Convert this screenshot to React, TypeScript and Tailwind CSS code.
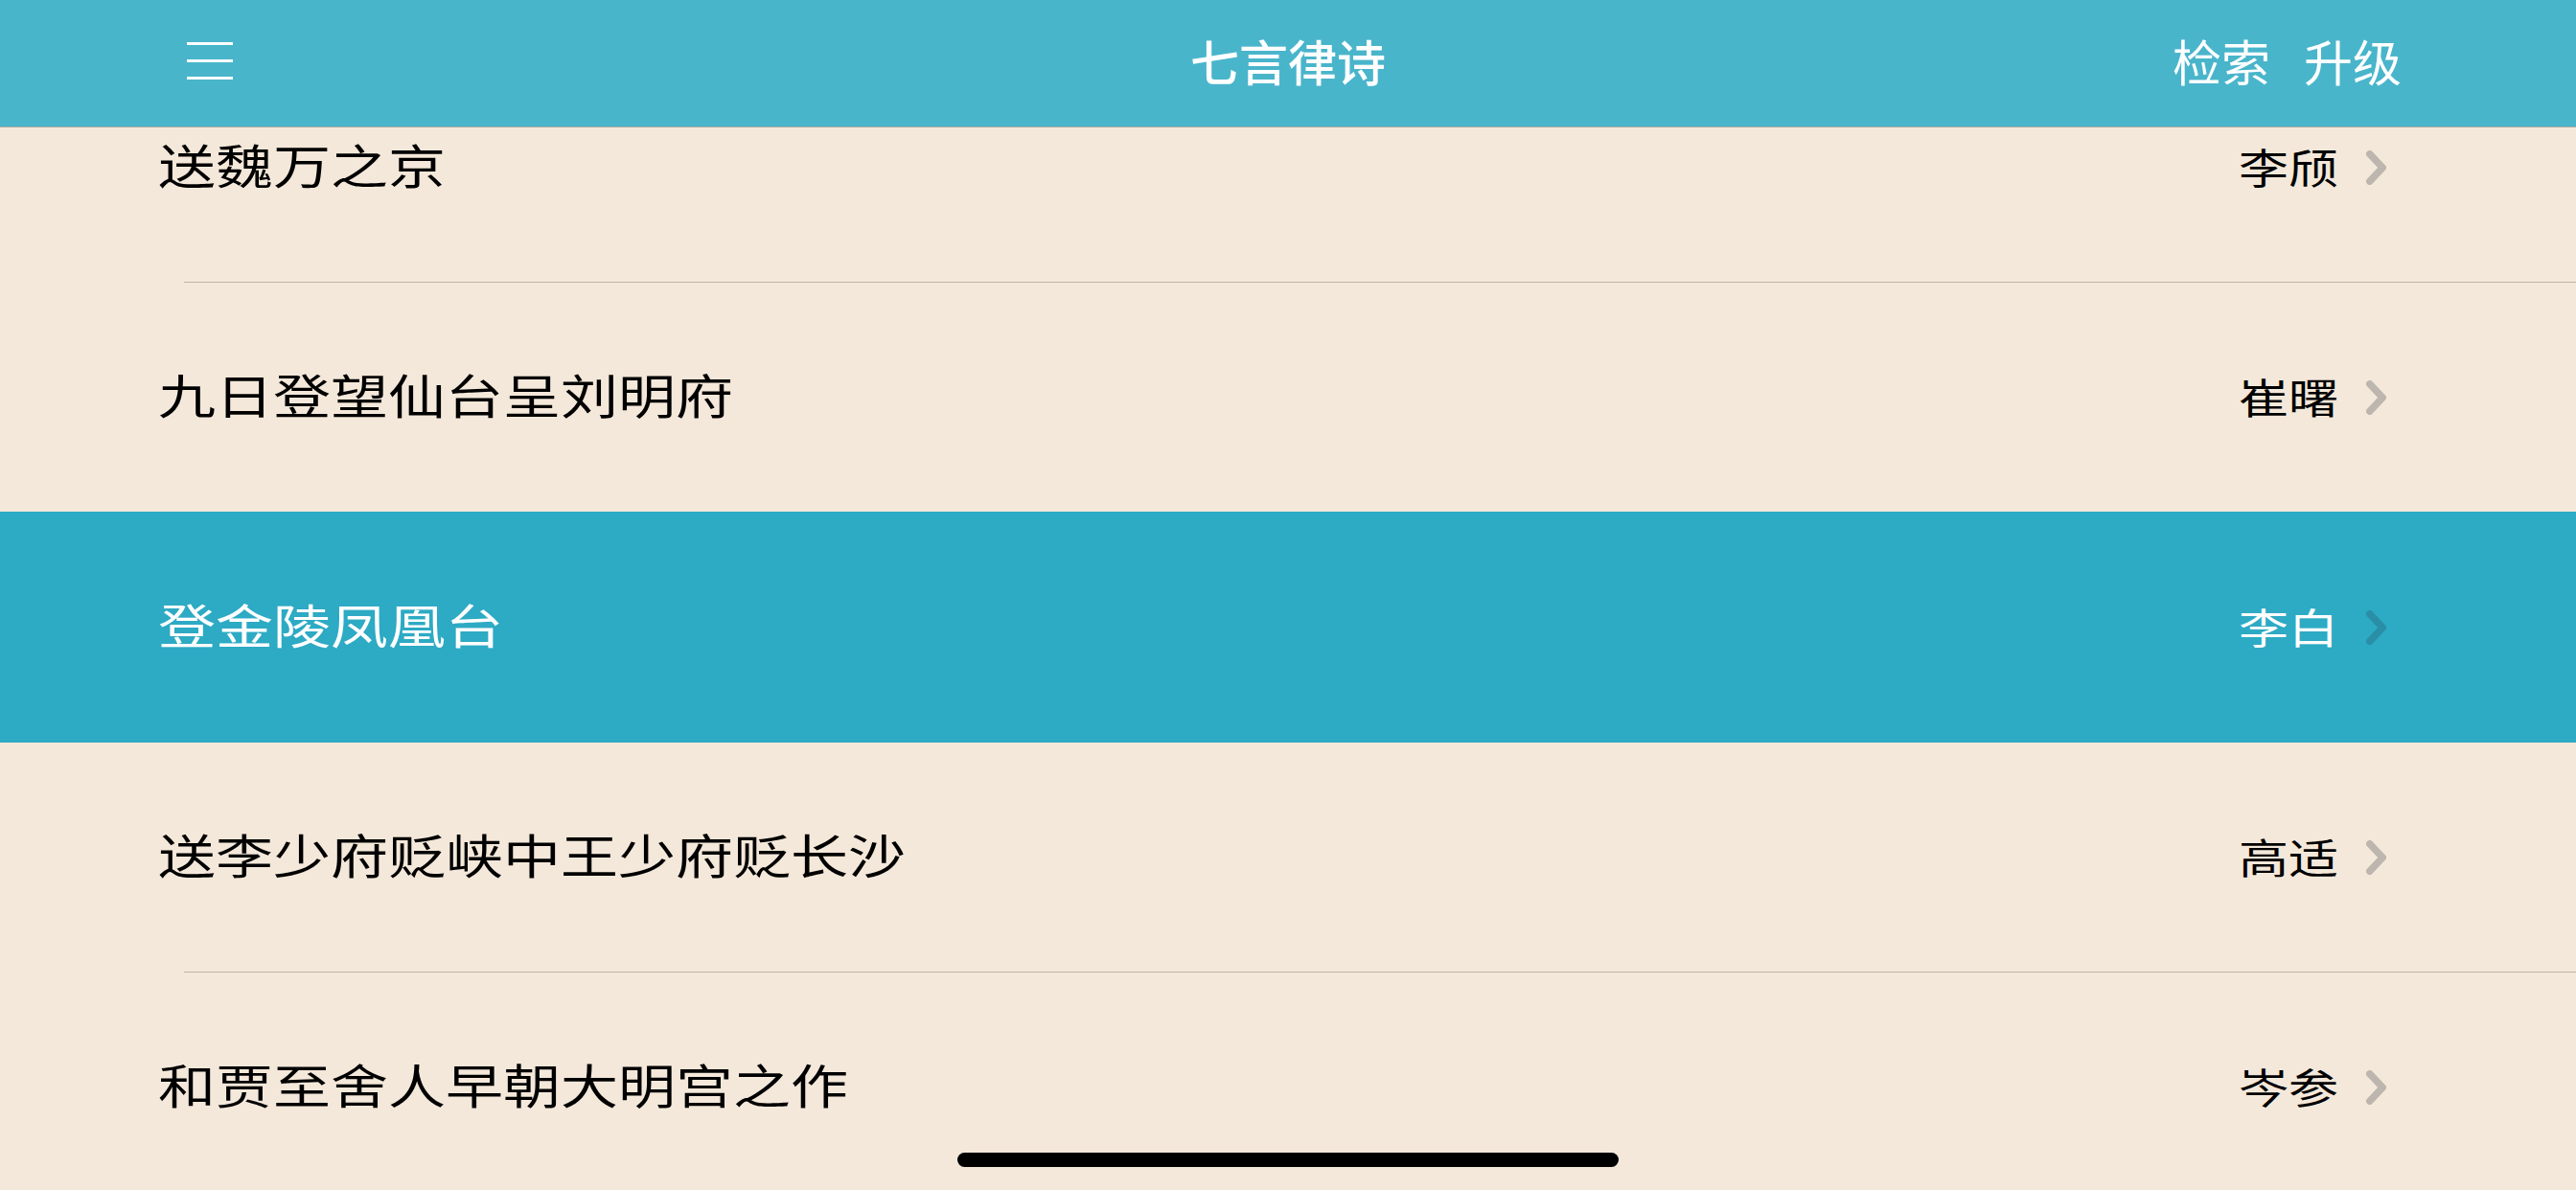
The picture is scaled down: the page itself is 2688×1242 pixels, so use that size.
const poems = [
  { title: "送魏万之京", author: "李颀", line: true },
  { title: "九日登望仙台呈刘明府", author: "崔曙", line: false },
  { title: "登金陵凤凰台", author: "李白", line: false, active: true },
  { title: "送李少府贬峡中王少府贬长沙", author: "高适", line: true },
  { title: "和贾至舍人早朝大明宫之作", author: "岑参", line: false },
];

function Chevron({ active }: { active?: boolean }) {
  return (
    <svg width="21" height="36" viewBox="0 0 21 36" fill="none" className={active ? "text-[#2a8ea6]" : "text-[#bdb6ae]"}>
      <path d="M3.8 3.8L17.2 18L3.8 32.2" stroke="currentColor" strokeWidth="7.5" strokeLinecap="round" strokeLinejoin="round" />
    </svg>
  );
}

function PoemRow({ title, author, line, active }: { title: string; author: string; line: boolean; active?: boolean }) {
  return (
    <div className={`relative flex items-center justify-between pl-[165px] pr-[198px] ${active ? "-mt-px h-[241px] bg-[#2daac4] text-white" : "h-[240px] text-black"}`}>
      <span className="-translate-y-[4px] scale-y-[0.82] text-[60px] leading-none">{title}</span>
      <div className="flex items-center gap-[29px]">
        <span className="-translate-y-[1px] scale-y-[0.82] text-[52px] leading-none">{author}</span>
        <Chevron active={active} />
      </div>
      {line && <div className="absolute right-0 bottom-0 left-[192px] h-px bg-[#bfb4aa]" />}
    </div>
  );
}

export default function App() {
  return (
    <div className="relative flex h-[1242px] w-[2688px] flex-col overflow-hidden bg-[#f4e8da] font-['Noto_Sans_CJK_SC',sans-serif]">
      <header className="relative z-10 grid h-[133px] shrink-0 grid-cols-3 items-center border-b border-[#a9a6a0] bg-[#49b5cb] pb-[5px] text-[51px] leading-none text-white">
        <div className="flex flex-col gap-[15px] pl-[195px]">
          <div className="h-[3px] w-[48px] bg-white" />
          <div className="h-[3px] w-[48px] bg-white" />
          <div className="h-[3px] w-[48px] bg-white" />
        </div>
        <h1 className="text-center font-medium">七言律诗</h1>
        <div className="flex justify-end gap-[35px] pr-[182px]">
          <span>检索</span>
          <span>升级</span>
        </div>
      </header>
      <div className="-mt-[78px]">
        {poems.map((p) => (
          <PoemRow key={p.title} {...p} />
        ))}
      </div>
      <div className="absolute bottom-[24px] left-[999px] h-[15px] w-[690px] rounded-[8px] bg-black" />
    </div>
  );
}
